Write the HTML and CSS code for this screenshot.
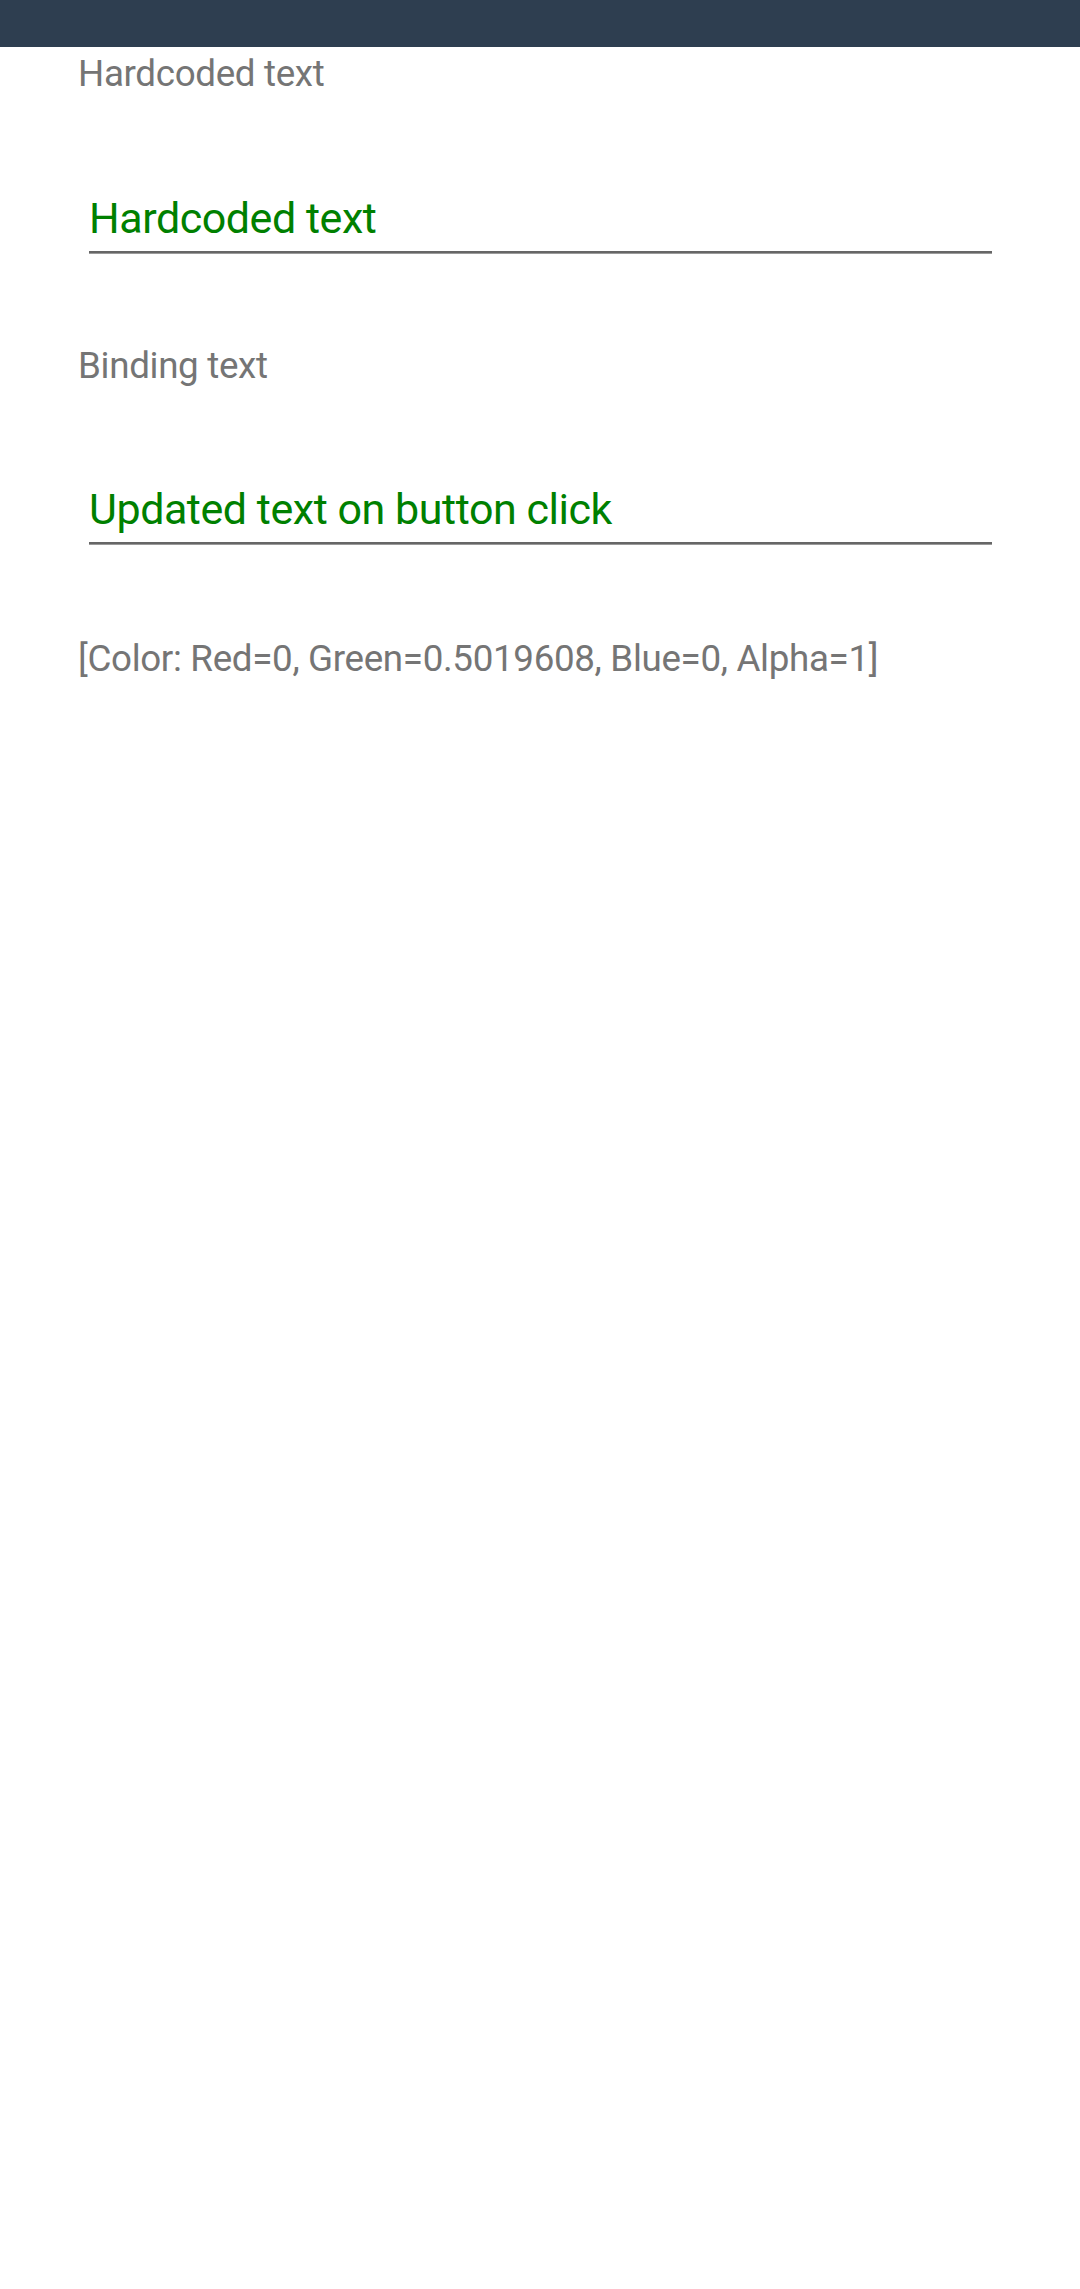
FILE: index.html
```html
<!DOCTYPE html>
<html>
<head>
<meta charset="utf-8">
<link rel="stylesheet" href="styles.css">
</head>
<body>
<div class="topbar"></div>
<main class="content">
  <div class="label label-first">Hardcoded text</div>
  <div class="entry">Hardcoded text</div>
  <div class="label label-after">Binding text</div>
  <div class="entry entry-second">Updated text on button click</div>
  <div class="label label-last">[Color: Red=0, Green=0.5019608, Blue=0, Alpha=1]</div>
</main>
</body>
</html>
```
FILE: styles.css
```css
html, body {
  margin: 0;
  padding: 0;
  background: #ffffff;
}
body {
  width: 1080px;
  height: 2289px;
  font-family: Roboto, "Noto Sans", sans-serif;
}
.topbar {
  height: 47px;
  background: #2e3e50;
}
.content {
  display: flex;
  flex-direction: column;
  padding-left: 78px;
}
.label {
  font-size: 36.75px;
  line-height: 43px;
  color: #757575;
  letter-spacing: -0.33px;
}
.label-first {
  margin-top: 5px;
}
.label-after {
  margin-top: 91px;
}
.label-last {
  margin-top: 93px;
}
.entry {
  margin-top: 98px;
  margin-left: 11px;
  margin-right: 88px;
  padding: 0 0 7px 0;
  font-size: 43px;
  line-height: 51px;
  color: #008000;
  letter-spacing: -0.45px;
  border-bottom: 2px solid #666666;
  box-shadow: 0 1px 0 #9a9a9a;
}
.entry-second {
  margin-top: 97px;
}
```
